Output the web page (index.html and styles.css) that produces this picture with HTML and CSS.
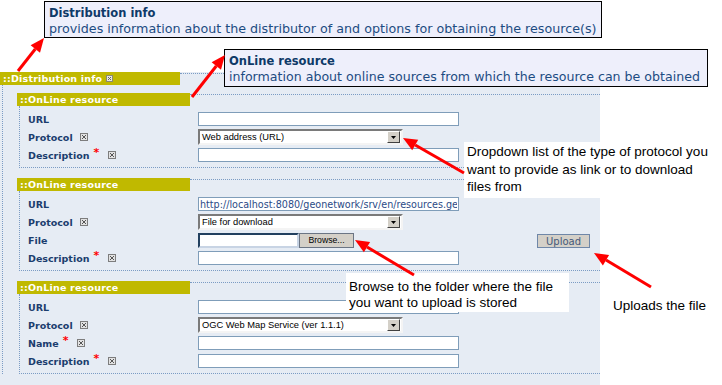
FILE: index.html
```html
<!DOCTYPE html>
<html lang="en">
<head>
  <meta charset="UTF-8">
  <title>Distribution info</title>
  <link rel="stylesheet" href="styles.css">
</head>
<body>
<div class="canvas">

  <!-- metadata form -->
  <div class="form">
    <div class="block outer">
      <div class="head">
        <span class="bar">::Distribution info <svg class="chk" width="7" height="7" viewBox="0 0 7 7"><rect x=".5" y=".5" width="6" height="6" fill="#e8e8e0" stroke="#8a8a70"/><path d="M2 2l3 3M5 2l-3 3" stroke="#666"/></svg></span>
        <span class="rule"></span>
      </div>
      <div class="body">

        <!-- online resource 1 -->
        <div class="block inner">
          <div class="head"><span class="bar">::OnLine resource</span><span class="rule"></span></div>
          <div class="body">
            <div class="row"><span class="label">URL</span><input class="text" type="text"></div>
            <div class="row"><span class="label">Protocol <svg class="chk" width="8" height="8" viewBox="0 0 8 8"><rect x=".5" y=".5" width="7" height="7" fill="#e2e2e2" stroke="#7d7d7d"/><path d="M2 2l4 4M6 2l-4 4" stroke="#555"/></svg></span>
              <div class="select"><span class="val">Web address (URL)</span><span class="drop"><svg width="5" height="3" viewBox="0 0 5 3"><path d="M0 0h5l-2.5 3z" fill="#000"/></svg></span></div>
            </div>
            <div class="row"><span class="label">Description<sup>*</sup> <svg class="chk" width="8" height="8" viewBox="0 0 8 8"><rect x=".5" y=".5" width="7" height="7" fill="#e2e2e2" stroke="#7d7d7d"/><path d="M2 2l4 4M6 2l-4 4" stroke="#555"/></svg></span><input class="text" type="text"></div>
          </div>
        </div>

        <!-- online resource 2 -->
        <div class="block inner">
          <div class="head"><span class="bar">::OnLine resource</span><span class="rule"></span></div>
          <div class="body">
            <div class="row"><span class="label">URL</span><input class="text" type="text" value="http://localhost:8080/geonetwork/srv/en/resources.get"></div>
            <div class="row"><span class="label">Protocol <svg class="chk" width="8" height="8" viewBox="0 0 8 8"><rect x=".5" y=".5" width="7" height="7" fill="#e2e2e2" stroke="#7d7d7d"/><path d="M2 2l4 4M6 2l-4 4" stroke="#555"/></svg></span>
              <div class="select"><span class="val">File for download</span><span class="drop"><svg width="5" height="3" viewBox="0 0 5 3"><path d="M0 0h5l-2.5 3z" fill="#000"/></svg></span></div>
            </div>
            <div class="row"><span class="label">File</span><input class="file" type="text"><button class="browse">Browse...</button><button class="upload">Upload</button></div>
            <div class="row"><span class="label">Description<sup>*</sup> <svg class="chk" width="8" height="8" viewBox="0 0 8 8"><rect x=".5" y=".5" width="7" height="7" fill="#e2e2e2" stroke="#7d7d7d"/><path d="M2 2l4 4M6 2l-4 4" stroke="#555"/></svg></span><input class="text" type="text"></div>
          </div>
        </div>

        <!-- online resource 3 -->
        <div class="block inner">
          <div class="head"><span class="bar">::OnLine resource</span><span class="rule"></span></div>
          <div class="body">
            <div class="row"><span class="label">URL</span><input class="text" type="text"></div>
            <div class="row"><span class="label">Protocol <svg class="chk" width="8" height="8" viewBox="0 0 8 8"><rect x=".5" y=".5" width="7" height="7" fill="#e2e2e2" stroke="#7d7d7d"/><path d="M2 2l4 4M6 2l-4 4" stroke="#555"/></svg></span>
              <div class="select"><span class="val">OGC Web Map Service (ver 1.1.1)</span><span class="drop"><svg width="5" height="3" viewBox="0 0 5 3"><path d="M0 0h5l-2.5 3z" fill="#000"/></svg></span></div>
            </div>
            <div class="row"><span class="label">Name<sup>*</sup> <svg class="chk" width="8" height="8" viewBox="0 0 8 8"><rect x=".5" y=".5" width="7" height="7" fill="#e2e2e2" stroke="#7d7d7d"/><path d="M2 2l4 4M6 2l-4 4" stroke="#555"/></svg></span><input class="text" type="text"></div>
            <div class="row"><span class="label">Description<sup>*</sup> <svg class="chk" width="8" height="8" viewBox="0 0 8 8"><rect x=".5" y=".5" width="7" height="7" fill="#e2e2e2" stroke="#7d7d7d"/><path d="M2 2l4 4M6 2l-4 4" stroke="#555"/></svg></span><input class="text" type="text"></div>
          </div>
        </div>

      </div>
    </div>
  </div>

  <!-- tooltips -->
  <div class="tip tip-dist">
    <b>Distribution info</b>
    provides information about the distributor of and options for obtaining the resource(s)
  </div>
  <div class="tip tip-online">
    <b>OnLine resource</b>
    information about online sources from which the resource can be obtained
  </div>

  <!-- annotations -->
  <div class="note note-drop">Dropdown list of the type of protocol you<br>want to provide as link or to download<br>files from</div>
  <div class="note note-browse">Browse to the folder where the file<br>you want to upload is stored</div>
  <div class="note note-upload">Uploads the file</div>

  <svg class="arrows" width="722" height="385" viewBox="0 0 722 385">
    <g stroke="#f00" stroke-width="3" fill="none">
      <path d="M18 71L35.3 49"/>
      <path d="M192 97L216.3 66"/>
      <path d="M464 173L415.2 145"/>
      <path d="M414 275L367 247"/>
      <path d="M651 287L606 260"/>
    </g>
    <g fill="#f00">
      <path d="M44 38L40 52.7L30.6 45.3z"/>
      <path d="M225 55L221 69.7L211.6 62.3z"/>
      <path d="M403 138L418.2 139.8L412.2 150.2z"/>
      <path d="M355 240L370.1 242L363.9 252.3z"/>
      <path d="M594 253L609.1 255L602.9 265.4z"/>
    </g>
  </svg>
</div>
</body>
</html>
```

FILE: styles.css
```css
body { margin: 0; background: #fff; font-family: "DejaVu Sans", Verdana, sans-serif; }
.canvas { position: relative; width: 722px; height: 385px; overflow: hidden; }

.form { width: 600px; height: 313px; margin-top: 72px; background: #e6ecf4; }
.head { display: flex; align-items: flex-start; }
.bar { display: flex; align-items: center; gap: 4px; box-sizing: border-box; height: 13px; padding-left: 3px; background: #c0b900; color: #fff; font-size: 9.5px; font-weight: bold; letter-spacing: 0.2px; }
.outer > .head .bar { width: 180px; }
.inner > .head .bar { width: 173px; }
.rule { flex: 1; margin-top: 1px; border-top: 1px dotted #7b9cc4; }
.outer > .body { margin-left: 2px; padding: 8px 0 0 14px; border-left: 1px dotted #7b9cc4; }
.inner { margin-bottom: 10px; }
.inner > .body { margin-left: 2px; padding: 4px 0 3px 8px; border-left: 1px dotted #7b9cc4; border-bottom: 1px dotted #7b9cc4; }

.row { display: flex; align-items: center; height: 18px; }
.label { display: flex; align-items: center; flex: none; width: 170px; color: #1b3d6e; font-size: 9.5px; font-weight: bold; }
.label sup { color: #f00; font-size: 11px; margin: -6px 0 0 4px; }
.label .chk { margin-left: 7px; }
.label sup + .chk { margin-left: 9px; }

.text { box-sizing: border-box; width: 261px; height: 14px; margin: 0; padding: 0 1px; border: 1px solid #7f9db9; background: #fff; color: #2b4a86; font-family: "DejaVu Sans", Verdana, sans-serif; font-size: 9.6px; }
.select { display: flex; align-items: center; box-sizing: border-box; width: 205px; height: 16px; background: #fff; border: 2px solid; border-color: #7a7a7a #f4f4f4 #f4f4f4 #7a7a7a; }
.select .val { flex: 1; padding-left: 2px; font-family: "Liberation Sans", Arial, sans-serif; font-size: 9.3px; color: #000; }
.drop { display: flex; align-items: center; justify-content: center; width: 11px; height: 10px; margin-right: 1px; background: #d4d0c8; border: 1px solid; border-color: #fff #404040 #404040 #fff; }

.file { box-sizing: border-box; width: 101px; height: 15px; margin: 0; border: 2px solid; border-color: #22405f #c8d4e4 #c8d4e4 #22405f; background: #fff; }
.browse { box-sizing: border-box; width: 55px; height: 15px; margin: 0; padding: 0; border: 1px solid #6b7584; background: #d4d0c8; color: #000; font-family: "Liberation Sans", Arial, sans-serif; font-size: 8.7px; }
.upload { box-sizing: border-box; width: 53px; height: 14px; margin: 2px 0 0 183px; padding: 0; border: 1px solid #6f87a8; background: #d4d0c8; color: #44597a; font-family: "DejaVu Sans", Verdana, sans-serif; font-size: 10px; }

.tip { position: absolute; box-sizing: border-box; padding: 3px 4px 0; border: 1px solid #000; background: #eeeffb; color: #1d4c82; line-height: 16px; }
.tip b { display: block; color: #0e3a68; font-size: 11.5px; }
.tip-dist { left: 44px; top: 1px; width: 558px; height: 37px; font-size: 12.7px; }
.tip-online { left: 224px; top: 49px; width: 484px; height: 38px; font-size: 12.6px; }

.note { position: absolute; padding: 1px 3px 2px; background: #fff; color: #000; font-family: "Liberation Sans", Arial, sans-serif; font-size: 13.5px; line-height: 17.5px; }
.note-drop { left: 464px; top: 142px; width: 252px; }
.note-browse { left: 346px; top: 273px; width: 217px; padding: 6px 3px 1px; line-height: 16px; }
.note-upload { left: 610px; top: 296px; }

.arrows { position: absolute; left: 0; top: 0; }
```
